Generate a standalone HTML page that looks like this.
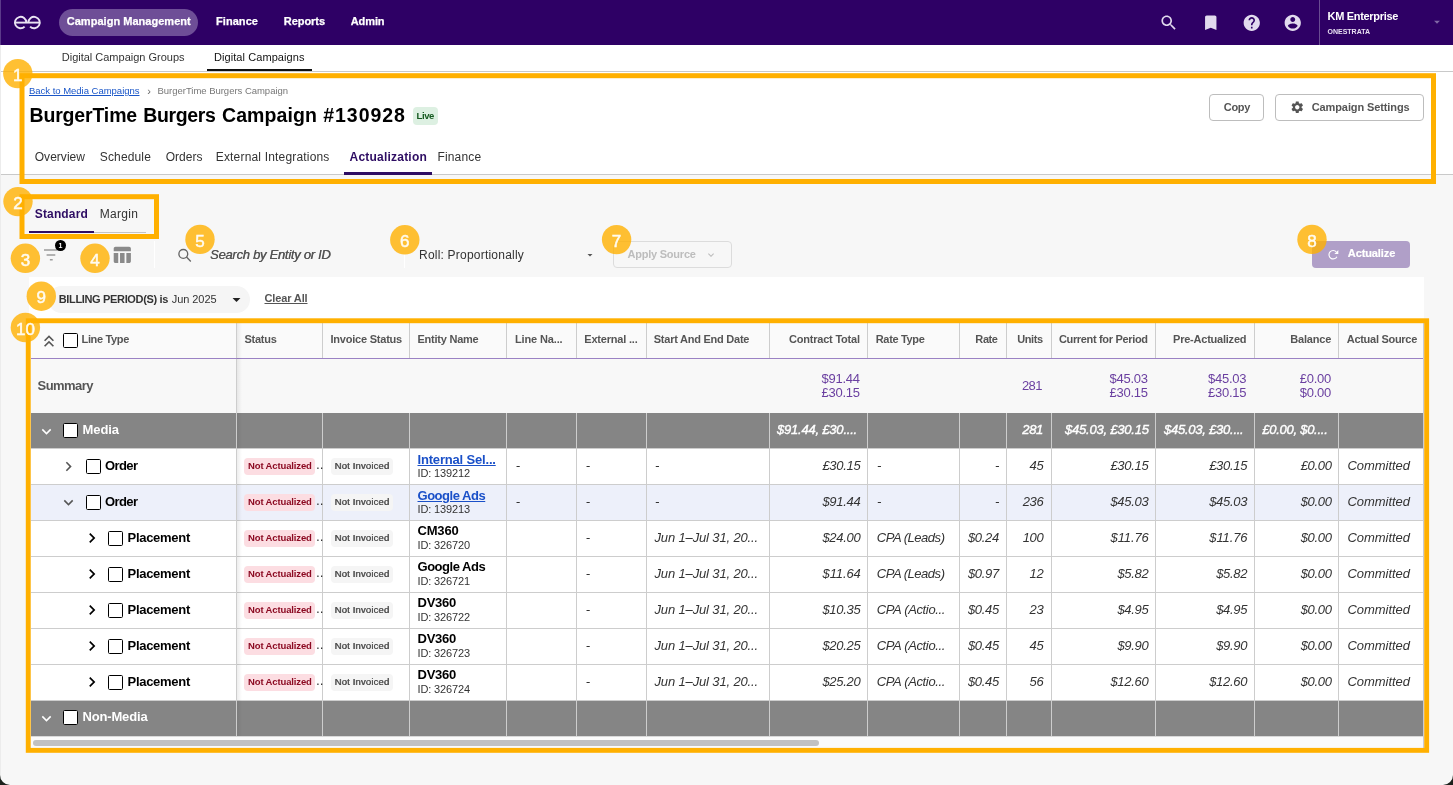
<!DOCTYPE html>
<html><head><meta charset="utf-8"><title>Campaign Actualization</title>
<style>
html,body{margin:0;padding:0;}
body{width:1453px;height:785px;position:relative;overflow:hidden;background:#F7F7F7;font-family:"Liberation Sans", sans-serif;}
#p{position:absolute;left:0;top:0;width:1453px;height:785px;overflow:hidden;will-change:transform;}
#p>div,#p>svg,#p>span{position:absolute;}
.t{white-space:pre;line-height:1;}
</style></head><body><div id="p">
<div style="left:0px;top:0px;width:1453px;height:45px;background:#2E0065;"></div>
<div style="left:0px;top:45px;width:1453px;height:129px;background:#fff;"></div>
<div style="left:0px;top:71px;width:1453px;height:1px;background:#C9C9C9;"></div>
<div style="left:0px;top:174px;width:1453px;height:1px;background:#C9C9C9;"></div>
<div style="left:0px;top:0px;width:1px;height:45px;background:#5B3A8A;"></div>
<div style="left:0px;top:45px;width:1px;height:740px;background:#ECECEC;"></div>
<div style="left:58.5px;top:9px;width:139.5px;height:27px;background:#6E4E97;border-radius:14px;"></div>
<svg style="left:0;top:0" width="60" height="45" viewBox="0 0 60 45"><g fill="none" stroke="#EAE3F3" stroke-width="1.9"><path d="M14.9 22.6 H39.8"/><path d="M26.3 22.55 A5.7 5.7 0 1 0 24.63 26.58"/><path d="M28.4 22.55 A5.7 5.7 0 1 1 30.07 26.58"/></g></svg>
<svg style="left:1158.55px;top:12.75px" width="19.5" height="19.5" viewBox="0 0 24 24"><path fill="#E2DAEE" d="M15.5 14h-.79l-.28-.27C15.41 12.59 16 11.11 16 9.5 16 5.91 13.09 3 9.5 3S3 5.91 3 9.5 5.91 16 9.5 16c1.61 0 3.09-.59 4.23-1.57l.27.28v.79l5 4.99L20.49 19l-4.99-5zm-6 0C7.01 14 5 11.99 5 9.5S7.01 5 9.5 5 14 7.01 14 9.5 11.99 14 9.5 14z" /></svg>
<svg style="left:1200.85px;top:12.75px" width="19.5" height="19.5" viewBox="0 0 24 24"><path fill="#E2DAEE" d="M17 3H7c-1.1 0-1.99.9-1.99 2L5 21l7-3 7 3V5c0-1.1-.9-2-2-2z" /></svg>
<svg style="left:1241.65px;top:12.850000000000001px" width="19.5" height="19.5" viewBox="0 0 24 24"><path fill="#E2DAEE" d="M12 2C6.48 2 2 6.48 2 12s4.48 10 10 10 10-4.48 10-10S17.52 2 12 2zm1 17h-2v-2h2v2zm2.07-7.75l-.9.92C13.45 12.9 13 13.5 13 15h-2v-.5c0-1.1.45-2.1 1.17-2.83l1.24-1.26c.37-.36.59-.86.59-1.41 0-1.1-.9-2-2-2s-2 .9-2 2H8c0-2.21 1.79-4 4-4s4 1.79 4 4c0 .88-.36 1.68-.93 2.25z" /></svg>
<svg style="left:1282.85px;top:12.850000000000001px" width="19.5" height="19.5" viewBox="0 0 24 24"><path fill="#E2DAEE" d="M12 2C6.48 2 2 6.48 2 12s4.48 10 10 10 10-4.48 10-10S17.52 2 12 2zm0 3c1.66 0 3 1.34 3 3s-1.34 3-3 3-3-1.34-3-3 1.34-3 3-3zm0 14.2c-2.5 0-4.71-1.28-6-3.22.03-1.99 4-3.08 6-3.08 1.99 0 5.97 1.09 6 3.08-1.29 1.94-3.5 3.22-6 3.22z" /></svg>
<div style="left:1319px;top:0px;width:1px;height:45px;background:#6A4D92;"></div>
<svg style="left:1429.7px;top:15.399999999999999px" width="14" height="14" viewBox="0 0 24 24"><path fill="#8067A6" d="M7 10l5 5 5-5z" /></svg>
<div style="left:207px;top:69px;width:105px;height:2px;background:#111;"></div>
<div style="left:413px;top:107px;width:25px;height:18px;background:#DDF0E2;border-radius:4px;"></div>
<div style="left:1209px;top:94px;width:55px;height:27px;background:#fff;border:1px solid #BDBDBD;border-radius:4px;box-sizing:border-box;"></div>
<div style="left:1275px;top:94px;width:149px;height:27px;background:#fff;border:1px solid #BDBDBD;border-radius:4px;box-sizing:border-box;"></div>
<svg style="left:1289.75px;top:100.25px" width="14.5" height="14.5" viewBox="0 0 24 24"><path fill="#555" d="M19.14 12.94c.04-.3.06-.61.06-.94 0-.32-.02-.64-.07-.94l2.03-1.58c.18-.14.23-.41.12-.61l-1.92-3.32c-.12-.22-.37-.29-.59-.22l-2.39.96c-.5-.38-1.03-.7-1.62-.94l-.36-2.54c-.04-.24-.24-.41-.48-.41h-3.84c-.24 0-.43.17-.47.41l-.36 2.54c-.59.24-1.13.57-1.62.94l-2.39-.96c-.22-.08-.47 0-.59.22L2.74 8.87c-.12.21-.08.47.12.61l2.03 1.58c-.05.3-.09.63-.09.94s.02.64.07.94l-2.03 1.58c-.18.14-.23.41-.12.61l1.92 3.32c.12.22.37.29.59.22l2.39-.96c.5.38 1.03.7 1.62.94l.36 2.54c.05.24.24.41.48.41h3.84c.24 0 .44-.17.47-.41l.36-2.54c.59-.24 1.13-.56 1.62-.94l2.39.96c.22.08.47 0 .59-.22l1.92-3.32c.12-.22.07-.47-.12-.61l-2.01-1.58zM12 15.6c-1.98 0-3.6-1.62-3.6-3.6s1.62-3.6 3.6-3.6 3.6 1.62 3.6 3.6-1.62 3.6-3.6 3.6z" /></svg>
<div style="left:344px;top:172px;width:88px;height:3px;background:#2E0D63;"></div>
<div style="left:29px;top:232px;width:117px;height:1px;background:#C4C4C4;"></div>
<div style="left:29px;top:230.5px;width:65px;height:2.5px;background:#2E0D63;"></div>
<svg style="left:40px;top:245px" width="24" height="20" viewBox="0 0 24 20"><g stroke="#9C9C9C" stroke-width="1.5"><path d="M4 5.1H17.6M6.6 9.9H15.3M9.9 14.7H12.7"/></g></svg>
<div style="left:55px;top:240.3px;width:10.8px;height:10.8px;background:#000;border-radius:50%;"></div>
<svg style="left:111.05000000000001px;top:244.05px" width="21.7" height="21.7" viewBox="0 0 24 24"><path fill="#8A8A8A" d="M10 10.02h5V21h-5zM17 21h3c1.1 0 2-.9 2-2v-9h-5v11zm3-18H5c-1.1 0-2 .9-2 2v3h19V5c0-1.1-.9-2-2-2zM3 19c0 1.1.9 2 2 2h3V10H3v9z" /></svg>
<div style="left:154px;top:241px;width:1px;height:27px;background:#fff;"></div>
<svg style="left:170px;top:242px" width="30" height="26" viewBox="170 242 30 26"><g fill="none" stroke="#666" stroke-width="1.35"><circle cx="183.3" cy="253.9" r="4.4"/><path d="M186.5 257.1 L190.8 261.4"/></g></svg>
<div style="left:403.5px;top:254px;width:1px;height:14px;background:#fff;"></div>
<svg style="left:584.2px;top:248.5px" width="12" height="12" viewBox="0 0 24 24"><path fill="#555" d="M7 10l5 5 5-5z" /></svg>
<div style="left:613px;top:241px;width:119px;height:27px;border:1px solid #DCDCDC;border-radius:4px;box-sizing:border-box;"></div>
<svg style="left:704.5px;top:248.5px" width="12" height="12" viewBox="0 0 24 24"><path fill="#BDBDBD" d="M16.59 8.59L12 13.17 7.41 8.59 6 10l6 6 6-6z" /></svg>
<div style="left:1312px;top:241px;width:98px;height:27px;background:#B09FC8;border-radius:4px;"></div>
<svg style="left:1320px;top:242px" width="26" height="26" viewBox="1320 242 26 26"><path d="M1336.32 251.89 A4.2 4.2 0 1 0 1336.91 256.67" fill="none" stroke="#fff" stroke-width="1.15"/><path d="M1338.3 250.0 V253.9 H1334.4 Z" fill="#fff"/></svg>
<div style="left:29px;top:277px;width:1395px;height:42px;background:#fff;"></div>
<div style="left:47.5px;top:286px;width:202.5px;height:27px;background:#F5F5F5;border-radius:14px;"></div>
<svg style="left:227.0px;top:289.8px" width="19" height="19" viewBox="0 0 24 24"><path fill="#222" d="M7 10l5 5 5-5z" /></svg>
<div style="left:31px;top:323px;width:1393px;height:35px;background:#FAFAFA;"></div>
<div style="left:31px;top:358px;width:1393px;height:1px;background:#9B82C4;"></div>
<div style="left:31px;top:359px;width:1393px;height:54px;background:#F8F8F8;"></div>
<div style="left:31px;top:413px;width:1393px;height:35px;background:#858585;"></div>
<div style="left:31px;top:448px;width:1393px;height:36px;background:#fff;"></div>
<div style="left:31px;top:484px;width:1393px;height:36px;background:#EDF0FA;"></div>
<div style="left:31px;top:520px;width:1393px;height:36px;background:#fff;"></div>
<div style="left:31px;top:556px;width:1393px;height:36px;background:#fff;"></div>
<div style="left:31px;top:592px;width:1393px;height:36px;background:#fff;"></div>
<div style="left:31px;top:628px;width:1393px;height:36px;background:#fff;"></div>
<div style="left:31px;top:664px;width:1393px;height:36px;background:#fff;"></div>
<div style="left:31px;top:700px;width:1393px;height:36px;background:#858585;"></div>
<div style="left:31px;top:736px;width:1393px;height:12px;background:#FAFAFA;"></div>
<div style="left:33px;top:740px;width:786px;height:6px;background:#C1C1C1;border-radius:3px;"></div>
<div style="left:31px;top:448px;width:1393px;height:1px;background:#CDCDCD;"></div>
<div style="left:31px;top:484px;width:1393px;height:1px;background:#CDCDCD;"></div>
<div style="left:31px;top:520px;width:1393px;height:1px;background:#CDCDCD;"></div>
<div style="left:31px;top:556px;width:1393px;height:1px;background:#CDCDCD;"></div>
<div style="left:31px;top:592px;width:1393px;height:1px;background:#CDCDCD;"></div>
<div style="left:31px;top:628px;width:1393px;height:1px;background:#CDCDCD;"></div>
<div style="left:31px;top:664px;width:1393px;height:1px;background:#CDCDCD;"></div>
<div style="left:31px;top:700px;width:1393px;height:1px;background:#CDCDCD;"></div>
<div style="left:31px;top:736px;width:1393px;height:1px;background:#D8D8D8;"></div>
<div style="left:236px;top:323px;width:1px;height:35px;background:#CDCDCD;"></div>
<div style="left:236px;top:413px;width:1px;height:323px;background:#CDCDCD;"></div>
<div style="left:322px;top:323px;width:1px;height:35px;background:#CDCDCD;"></div>
<div style="left:322px;top:413px;width:1px;height:323px;background:#CDCDCD;"></div>
<div style="left:409px;top:323px;width:1px;height:35px;background:#CDCDCD;"></div>
<div style="left:409px;top:413px;width:1px;height:323px;background:#CDCDCD;"></div>
<div style="left:506px;top:323px;width:1px;height:35px;background:#CDCDCD;"></div>
<div style="left:506px;top:413px;width:1px;height:323px;background:#CDCDCD;"></div>
<div style="left:576px;top:323px;width:1px;height:35px;background:#CDCDCD;"></div>
<div style="left:576px;top:413px;width:1px;height:323px;background:#CDCDCD;"></div>
<div style="left:646px;top:323px;width:1px;height:35px;background:#CDCDCD;"></div>
<div style="left:646px;top:413px;width:1px;height:323px;background:#CDCDCD;"></div>
<div style="left:769px;top:323px;width:1px;height:35px;background:#CDCDCD;"></div>
<div style="left:769px;top:413px;width:1px;height:323px;background:#CDCDCD;"></div>
<div style="left:867px;top:323px;width:1px;height:35px;background:#CDCDCD;"></div>
<div style="left:867px;top:413px;width:1px;height:323px;background:#CDCDCD;"></div>
<div style="left:959px;top:323px;width:1px;height:35px;background:#CDCDCD;"></div>
<div style="left:959px;top:413px;width:1px;height:323px;background:#CDCDCD;"></div>
<div style="left:1006px;top:323px;width:1px;height:35px;background:#CDCDCD;"></div>
<div style="left:1006px;top:413px;width:1px;height:323px;background:#CDCDCD;"></div>
<div style="left:1051px;top:323px;width:1px;height:35px;background:#CDCDCD;"></div>
<div style="left:1051px;top:413px;width:1px;height:323px;background:#CDCDCD;"></div>
<div style="left:1155px;top:323px;width:1px;height:35px;background:#CDCDCD;"></div>
<div style="left:1155px;top:413px;width:1px;height:323px;background:#CDCDCD;"></div>
<div style="left:1254px;top:323px;width:1px;height:35px;background:#CDCDCD;"></div>
<div style="left:1254px;top:413px;width:1px;height:323px;background:#CDCDCD;"></div>
<div style="left:1338px;top:323px;width:1px;height:35px;background:#CDCDCD;"></div>
<div style="left:1338px;top:413px;width:1px;height:323px;background:#CDCDCD;"></div>
<div style="left:1423px;top:323px;width:1px;height:425px;background:#C9CAD2;"></div>
<div style="left:236px;top:359px;width:1px;height:54px;background:#CDCDCD;"></div>
<div style="left:237px;top:323px;width:5px;height:413px;background:linear-gradient(to right,rgba(0,0,0,0.07),rgba(0,0,0,0));"></div>
<svg style="left:39.0px;top:331.0px" width="20" height="20" viewBox="0 0 24 24"><path fill="#555" d="M6 17.59L7.41 19 12 14.42 16.59 19 18 17.59l-6-6z M6 11l1.41 1.41L12 7.83l4.59 4.58L18 11l-6-6z" /></svg>
<div style="left:63px;top:333px;width:15px;height:15px;background:#fff;border:1.2px solid #000;border-radius:1.6px;box-sizing:border-box;"></div>
<svg style="left:37.0px;top:421.5px" width="19" height="19" viewBox="0 0 24 24"><path fill="#fff" d="M16.59 8.59L12 13.17 7.41 8.59 6 10l6 6 6-6z" /></svg>
<div style="left:63px;top:423px;width:15px;height:15px;background:#fff;border:1.2px solid #000;border-radius:1.6px;box-sizing:border-box;"></div>
<svg style="left:37.0px;top:709.0px" width="19" height="19" viewBox="0 0 24 24"><path fill="#fff" d="M16.59 8.59L12 13.17 7.41 8.59 6 10l6 6 6-6z" /></svg>
<div style="left:63px;top:710px;width:15px;height:15px;background:#fff;border:1.2px solid #000;border-radius:1.6px;box-sizing:border-box;"></div>
<svg style="left:59.0px;top:456.5px" width="19" height="19" viewBox="0 0 24 24"><path fill="#555" d="M10 6L8.59 7.41 13.17 12l-4.58 4.59L10 18l6-6z" /></svg>
<div style="left:86px;top:459px;width:15px;height:15px;background:#fff;border:1.2px solid #000;border-radius:1.6px;box-sizing:border-box;"></div>
<div style="left:244px;top:458px;width:71px;height:17px;background:#FCDDE2;border-radius:4px;"></div>
<div style="left:331px;top:458px;width:62px;height:17px;background:#F5F5F5;border-radius:4px;"></div>
<svg style="left:59.0px;top:492.5px" width="19" height="19" viewBox="0 0 24 24"><path fill="#555" d="M16.59 8.59L12 13.17 7.41 8.59 6 10l6 6 6-6z" /></svg>
<div style="left:86px;top:495px;width:15px;height:15px;background:#fff;border:1.2px solid #000;border-radius:1.6px;box-sizing:border-box;"></div>
<div style="left:244px;top:494px;width:71px;height:17px;background:#FCDDE2;border-radius:4px;"></div>
<div style="left:331px;top:494px;width:62px;height:17px;background:#F5F5F5;border-radius:4px;"></div>
<svg style="left:82.3px;top:528.2px" width="20" height="20" viewBox="0 0 24 24"><path fill="#000" d="M10 6L8.59 7.41 13.17 12l-4.58 4.59L10 18l6-6z" /></svg>
<div style="left:108px;top:531px;width:15px;height:15px;background:#fff;border:1.2px solid #000;border-radius:1.6px;box-sizing:border-box;"></div>
<div style="left:244px;top:530px;width:71px;height:17px;background:#FCDDE2;border-radius:4px;"></div>
<div style="left:331px;top:530px;width:62px;height:17px;background:#F5F5F5;border-radius:4px;"></div>
<svg style="left:82.3px;top:564.2px" width="20" height="20" viewBox="0 0 24 24"><path fill="#000" d="M10 6L8.59 7.41 13.17 12l-4.58 4.59L10 18l6-6z" /></svg>
<div style="left:108px;top:567px;width:15px;height:15px;background:#fff;border:1.2px solid #000;border-radius:1.6px;box-sizing:border-box;"></div>
<div style="left:244px;top:566px;width:71px;height:17px;background:#FCDDE2;border-radius:4px;"></div>
<div style="left:331px;top:566px;width:62px;height:17px;background:#F5F5F5;border-radius:4px;"></div>
<svg style="left:82.3px;top:600.2px" width="20" height="20" viewBox="0 0 24 24"><path fill="#000" d="M10 6L8.59 7.41 13.17 12l-4.58 4.59L10 18l6-6z" /></svg>
<div style="left:108px;top:603px;width:15px;height:15px;background:#fff;border:1.2px solid #000;border-radius:1.6px;box-sizing:border-box;"></div>
<div style="left:244px;top:602px;width:71px;height:17px;background:#FCDDE2;border-radius:4px;"></div>
<div style="left:331px;top:602px;width:62px;height:17px;background:#F5F5F5;border-radius:4px;"></div>
<svg style="left:82.3px;top:636.2px" width="20" height="20" viewBox="0 0 24 24"><path fill="#000" d="M10 6L8.59 7.41 13.17 12l-4.58 4.59L10 18l6-6z" /></svg>
<div style="left:108px;top:639px;width:15px;height:15px;background:#fff;border:1.2px solid #000;border-radius:1.6px;box-sizing:border-box;"></div>
<div style="left:244px;top:638px;width:71px;height:17px;background:#FCDDE2;border-radius:4px;"></div>
<div style="left:331px;top:638px;width:62px;height:17px;background:#F5F5F5;border-radius:4px;"></div>
<svg style="left:82.3px;top:672.2px" width="20" height="20" viewBox="0 0 24 24"><path fill="#000" d="M10 6L8.59 7.41 13.17 12l-4.58 4.59L10 18l6-6z" /></svg>
<div style="left:108px;top:675px;width:15px;height:15px;background:#fff;border:1.2px solid #000;border-radius:1.6px;box-sizing:border-box;"></div>
<div style="left:244px;top:674px;width:71px;height:17px;background:#FCDDE2;border-radius:4px;"></div>
<div style="left:331px;top:674px;width:62px;height:17px;background:#F5F5F5;border-radius:4px;"></div>
<svg style="left:0;top:0" width="1453" height="785" viewBox="0 0 1453 785"><rect x="22.0" y="75.7" width="1411.5" height="105.8" fill="none" stroke="#FFB000" stroke-width="5"/><rect x="22.0" y="196.7" width="134.5" height="39.80000000000001" fill="none" stroke="#FFB000" stroke-width="5"/><rect x="28.25" y="320.75" width="1398.3999999999999" height="429.59999999999997" fill="none" stroke="#FFB000" stroke-width="4.9"/><circle cx="17.8" cy="73.6" r="14.7" fill="#FFB000" fill-opacity="0.8"/><circle cx="18" cy="201.6" r="14.7" fill="#FFB000" fill-opacity="0.8"/><circle cx="25.4" cy="258.3" r="14.7" fill="#FFB000" fill-opacity="0.8"/><circle cx="95" cy="258.3" r="14.7" fill="#FFB000" fill-opacity="0.8"/><circle cx="200" cy="239.4" r="14.7" fill="#FFB000" fill-opacity="0.8"/><circle cx="404.8" cy="239.8" r="14.7" fill="#FFB000" fill-opacity="0.8"/><circle cx="616.6" cy="239.6" r="14.7" fill="#FFB000" fill-opacity="0.8"/><circle cx="1312" cy="239.4" r="14.7" fill="#FFB000" fill-opacity="0.8"/><circle cx="41.3" cy="296.2" r="14.7" fill="#FFB000" fill-opacity="0.8"/><circle cx="25.4" cy="327.5" r="14.7" fill="#FFB000" fill-opacity="0.8"/><path d="M0 775 A10 10 0 0 0 10 785 L0 785 Z" fill="#1C211C"/><path d="M1453 775 A10 10 0 0 1 1443 785 L1453 785 Z" fill="#1C211C"/></svg>
<span class="t" style="top:16px;font-size:11px;color:#fff;font-weight:bold;letter-spacing:0.028px;left:66.75px;-webkit-text-stroke:0.25px #fff;">Campaign Management</span>
<span class="t" style="top:16px;font-size:11px;color:#fff;font-weight:bold;letter-spacing:0.060px;left:216px;-webkit-text-stroke:0.25px #fff;">Finance</span>
<span class="t" style="top:16px;font-size:11px;color:#fff;font-weight:bold;letter-spacing:-0.045px;left:283.75px;-webkit-text-stroke:0.25px #fff;">Reports</span>
<span class="t" style="top:16px;font-size:11px;color:#fff;font-weight:bold;letter-spacing:-0.097px;left:350.75px;-webkit-text-stroke:0.25px #fff;">Admin</span>
<span class="t" style="top:11px;font-size:11px;color:#fff;font-weight:bold;letter-spacing:-0.314px;left:1327.5px;">KM Enterprise</span>
<span class="t" style="top:28px;font-size:7px;color:#E8E0F2;font-weight:bold;left:1327.5px;">ONESTRATA</span>
<span class="t" style="top:52px;font-size:11px;color:#333;letter-spacing:-0.006px;left:61.75px;">Digital Campaign Groups</span>
<span class="t" style="top:52px;font-size:11px;color:#111;letter-spacing:0.073px;left:214px;">Digital Campaigns</span>
<span class="t" style="top:86px;font-size:9.5px;color:#1A56C8;letter-spacing:-0.017px;left:29px;text-decoration:underline;">Back to Media Campaigns</span>
<span class="t" style="top:86px;font-size:11px;color:#666;left:147.2px;">›</span>
<span class="t" style="top:86px;font-size:9.5px;color:#777;letter-spacing:-0.023px;left:157.5px;">BurgerTime Burgers Campaign</span>
<span class="t" style="top:106px;font-size:19.5px;color:#000;font-weight:bold;letter-spacing:-0.159px;left:29.5px;">BurgerTime</span>
<span class="t" style="top:106px;font-size:19.5px;color:#000;font-weight:bold;letter-spacing:-0.362px;left:143.25px;">Burgers</span>
<span class="t" style="top:106px;font-size:19.5px;color:#000;font-weight:bold;letter-spacing:0.092px;left:222px;">Campaign</span>
<span class="t" style="top:106px;font-size:19.5px;color:#000;font-weight:bold;letter-spacing:0.954px;left:323.25px;">#130928</span>
<span class="t" style="top:111px;font-size:9.5px;color:#14591F;font-weight:bold;letter-spacing:-0.379px;left:416.5px;">Live</span>
<span class="t" style="top:102px;font-size:11px;color:#555;font-weight:bold;letter-spacing:-0.312px;left:1223.75px;">Copy</span>
<span class="t" style="top:102px;font-size:11px;color:#555;font-weight:bold;letter-spacing:-0.110px;left:1311.75px;">Campaign Settings</span>
<span class="t" style="top:151px;font-size:12px;color:#333;letter-spacing:0.029px;left:34.75px;">Overview</span>
<span class="t" style="top:151px;font-size:12px;color:#333;letter-spacing:0.150px;left:99.75px;">Schedule</span>
<span class="t" style="top:151px;font-size:12px;color:#333;letter-spacing:0.010px;left:165.75px;">Orders</span>
<span class="t" style="top:151px;font-size:12px;color:#333;letter-spacing:0.176px;left:215.75px;">External Integrations</span>
<span class="t" style="top:151px;font-size:12px;color:#2E0D63;font-weight:bold;letter-spacing:0.218px;left:349.5px;">Actualization</span>
<span class="t" style="top:151px;font-size:12px;color:#333;letter-spacing:0.150px;left:437.5px;">Finance</span>
<span class="t" style="top:208px;font-size:12px;color:#2E0D63;font-weight:bold;letter-spacing:0.154px;left:34.75px;">Standard</span>
<span class="t" style="top:208px;font-size:12px;color:#333;letter-spacing:0.302px;left:99.75px;">Margin</span>
<span class="t" style="top:242px;font-size:7px;color:#fff;font-weight:bold;left:58.6px;">1</span>
<span class="t" style="top:248px;font-size:13px;color:#555;font-style:italic;letter-spacing:-0.271px;left:210px;text-shadow:0.3px 0 0 #555;">Search by Entity or ID</span>
<span class="t" style="top:249px;font-size:12px;color:#333;letter-spacing:0.214px;left:419px;">Roll: Proportionally</span>
<span class="t" style="top:249px;font-size:11px;color:#BDBDBD;font-weight:bold;letter-spacing:-0.226px;left:627.5px;">Apply Source</span>
<span class="t" style="top:248px;font-size:11px;color:#fff;font-weight:bold;letter-spacing:-0.100px;left:1347.8px;-webkit-text-stroke:0.2px #fff;">Actualize</span>
<span class="t" style="top:294px;font-size:11px;color:#333;font-weight:bold;letter-spacing:-0.344px;left:58.75px;">BILLING PERIOD(S) is</span>
<span class="t" style="top:294px;font-size:11px;color:#333;letter-spacing:-0.064px;left:171.75px;">Jun 2025</span>
<span class="t" style="top:293px;font-size:11px;color:#555;font-weight:bold;letter-spacing:-0.137px;left:264.5px;text-decoration:underline;">Clear All</span>
<span class="t" style="top:334px;font-size:11px;color:#555;font-weight:bold;letter-spacing:-0.337px;left:81.5px;">Line Type</span>
<span class="t" style="top:334px;font-size:11px;color:#555;font-weight:bold;letter-spacing:-0.271px;left:244.5px;">Status</span>
<span class="t" style="top:334px;font-size:11px;color:#555;font-weight:bold;letter-spacing:-0.220px;left:330.5px;">Invoice Status</span>
<span class="t" style="top:334px;font-size:11px;color:#555;font-weight:bold;letter-spacing:-0.234px;left:417.5px;">Entity Name</span>
<span class="t" style="top:334px;font-size:11px;color:#555;font-weight:bold;letter-spacing:-0.141px;left:515px;">Line Na...</span>
<span class="t" style="top:334px;font-size:11px;color:#555;font-weight:bold;letter-spacing:-0.199px;left:584.25px;">External ...</span>
<span class="t" style="top:334px;font-size:11px;color:#555;font-weight:bold;letter-spacing:-0.240px;left:653.75px;">Start And End Date</span>
<span class="t" style="top:334px;font-size:11px;color:#555;font-weight:bold;letter-spacing:-0.214px;right:593.21px;">Contract Total</span>
<span class="t" style="top:334px;font-size:11px;color:#555;font-weight:bold;letter-spacing:-0.335px;left:875.75px;">Rate Type</span>
<span class="t" style="top:334px;font-size:11px;color:#555;font-weight:bold;letter-spacing:-0.398px;right:455.40px;">Rate</span>
<span class="t" style="top:334px;font-size:11px;color:#555;font-weight:bold;letter-spacing:-0.350px;right:410.10px;">Units</span>
<span class="t" style="top:334px;font-size:11px;color:#555;font-weight:bold;letter-spacing:-0.332px;right:305.33px;">Current for Period</span>
<span class="t" style="top:334px;font-size:11px;color:#555;font-weight:bold;letter-spacing:-0.227px;right:206.73px;">Pre-Actualized</span>
<span class="t" style="top:334px;font-size:11px;color:#555;font-weight:bold;letter-spacing:-0.208px;right:121.96px;">Balance</span>
<span class="t" style="top:334px;font-size:11px;color:#555;font-weight:bold;letter-spacing:-0.286px;left:1346.75px;">Actual Source</span>
<span class="t" style="top:379px;font-size:13px;color:#555;font-weight:bold;letter-spacing:-0.536px;left:37.5px;">Summary</span>
<span class="t" style="top:372px;font-size:13px;color:#6A3FA0;letter-spacing:-0.253px;right:593.25px;">$91.44</span>
<span class="t" style="top:386px;font-size:13px;color:#6A3FA0;letter-spacing:-0.253px;right:593.25px;">£30.15</span>
<span class="t" style="top:379px;font-size:13px;color:#6A3FA0;letter-spacing:-0.568px;right:411.07px;">281</span>
<span class="t" style="top:372px;font-size:13px;color:#6A3FA0;letter-spacing:-0.253px;right:305.25px;">$45.03</span>
<span class="t" style="top:386px;font-size:13px;color:#6A3FA0;letter-spacing:-0.253px;right:305.25px;">£30.15</span>
<span class="t" style="top:372px;font-size:13px;color:#6A3FA0;letter-spacing:-0.253px;right:206.75px;">$45.03</span>
<span class="t" style="top:386px;font-size:13px;color:#6A3FA0;letter-spacing:-0.253px;right:206.75px;">£30.15</span>
<span class="t" style="top:372px;font-size:13px;color:#6A3FA0;letter-spacing:-0.259px;right:122.01px;">£0.00</span>
<span class="t" style="top:386px;font-size:13px;color:#6A3FA0;letter-spacing:-0.259px;right:122.01px;">$0.00</span>
<span class="t" style="top:423px;font-size:13px;color:#fff;font-weight:bold;letter-spacing:-0.069px;left:82.5px;">Media</span>
<span class="t" style="top:423px;font-size:13px;color:#fff;font-style:italic;letter-spacing:-0.208px;left:777px;-webkit-text-stroke:0.4px #fff;">$91.44, £30....</span>
<span class="t" style="top:423px;font-size:13px;color:#fff;font-style:italic;letter-spacing:-0.401px;right:410.15px;-webkit-text-stroke:0.4px #fff;">281</span>
<span class="t" style="top:423px;font-size:13px;color:#fff;font-style:italic;letter-spacing:-0.214px;left:1065px;-webkit-text-stroke:0.4px #fff;">$45.03, £30.15</span>
<span class="t" style="top:423px;font-size:13px;color:#fff;font-style:italic;letter-spacing:-0.242px;left:1164px;-webkit-text-stroke:0.4px #fff;">$45.03, £30....</span>
<span class="t" style="top:423px;font-size:13px;color:#fff;font-style:italic;letter-spacing:-0.267px;left:1262.3px;-webkit-text-stroke:0.4px #fff;">£0.00, $0....</span>
<span class="t" style="top:710px;font-size:13px;color:#fff;font-weight:bold;letter-spacing:-0.161px;left:82.5px;">Non-Media</span>
<span class="t" style="top:459px;font-size:13px;color:#000;font-weight:bold;letter-spacing:-0.581px;left:105px;">Order</span>
<span class="t" style="top:461px;font-size:9.5px;color:#8C0A22;font-weight:bold;letter-spacing:-0.134px;left:248px;">Not Actualized</span>
<span class="t" style="top:459px;font-size:12px;color:#222;left:316.3px;letter-spacing:0.3px;">..</span>
<span class="t" style="top:461px;font-size:9.5px;color:#505050;letter-spacing:0.161px;left:334.5px;text-shadow:0.4px 0 0 #505050;">Not Invoiced</span>
<span class="t" style="top:453px;font-size:13px;color:#1A50C8;font-weight:bold;letter-spacing:-0.178px;left:417.5px;text-decoration:underline;">Internal Sel...</span>
<span class="t" style="top:468px;font-size:11px;color:#333;letter-spacing:-0.133px;left:417.5px;">ID: 139212</span>
<span class="t" style="top:459px;font-size:13px;color:#333;font-style:italic;left:515.75px;">-</span>
<span class="t" style="top:459px;font-size:13px;color:#333;font-style:italic;left:585.75px;">-</span>
<span class="t" style="top:459px;font-size:13px;color:#333;font-style:italic;left:655px;">-</span>
<span class="t" style="top:459px;font-size:13px;color:#333;font-style:italic;letter-spacing:-0.286px;right:592.54px;">£30.15</span>
<span class="t" style="top:459px;font-size:13px;color:#333;font-style:italic;left:877px;">-</span>
<span class="t" style="top:459px;font-size:13px;color:#333;font-style:italic;right:453.75px;">-</span>
<span class="t" style="top:459px;font-size:13px;color:#333;font-style:italic;letter-spacing:-0.284px;right:409.53px;">45</span>
<span class="t" style="top:459px;font-size:13px;color:#333;font-style:italic;letter-spacing:-0.286px;right:304.54px;">£30.15</span>
<span class="t" style="top:459px;font-size:13px;color:#333;font-style:italic;letter-spacing:-0.286px;right:205.79px;">£30.15</span>
<span class="t" style="top:459px;font-size:13px;color:#333;font-style:italic;letter-spacing:-0.289px;right:121.29px;">£0.00</span>
<span class="t" style="top:459px;font-size:13px;color:#333;font-style:italic;letter-spacing:-0.040px;left:1347.5px;">Committed</span>
<span class="t" style="top:495px;font-size:13px;color:#000;font-weight:bold;letter-spacing:-0.581px;left:105px;">Order</span>
<span class="t" style="top:497px;font-size:9.5px;color:#8C0A22;font-weight:bold;letter-spacing:-0.134px;left:248px;">Not Actualized</span>
<span class="t" style="top:495px;font-size:12px;color:#222;left:316.3px;letter-spacing:0.3px;">..</span>
<span class="t" style="top:497px;font-size:9.5px;color:#505050;letter-spacing:0.161px;left:334.5px;text-shadow:0.4px 0 0 #505050;">Not Invoiced</span>
<span class="t" style="top:489px;font-size:13px;color:#1A50C8;font-weight:bold;letter-spacing:-0.472px;left:417.5px;text-decoration:underline;">Google Ads</span>
<span class="t" style="top:504px;font-size:11px;color:#333;letter-spacing:-0.133px;left:417.5px;">ID: 139213</span>
<span class="t" style="top:495px;font-size:13px;color:#333;font-style:italic;left:515.75px;">-</span>
<span class="t" style="top:495px;font-size:13px;color:#333;font-style:italic;left:585.75px;">-</span>
<span class="t" style="top:495px;font-size:13px;color:#333;font-style:italic;left:655px;">-</span>
<span class="t" style="top:495px;font-size:13px;color:#333;font-style:italic;letter-spacing:-0.286px;right:592.54px;">$91.44</span>
<span class="t" style="top:495px;font-size:13px;color:#333;font-style:italic;left:877px;">-</span>
<span class="t" style="top:495px;font-size:13px;color:#333;font-style:italic;right:453.75px;">-</span>
<span class="t" style="top:495px;font-size:13px;color:#333;font-style:italic;letter-spacing:-0.284px;right:409.53px;">236</span>
<span class="t" style="top:495px;font-size:13px;color:#333;font-style:italic;letter-spacing:-0.286px;right:304.54px;">$45.03</span>
<span class="t" style="top:495px;font-size:13px;color:#333;font-style:italic;letter-spacing:-0.286px;right:205.79px;">$45.03</span>
<span class="t" style="top:495px;font-size:13px;color:#333;font-style:italic;letter-spacing:-0.289px;right:121.29px;">$0.00</span>
<span class="t" style="top:495px;font-size:13px;color:#333;font-style:italic;letter-spacing:-0.040px;left:1347.5px;">Committed</span>
<span class="t" style="top:531px;font-size:13px;color:#000;font-weight:bold;letter-spacing:-0.283px;left:127.5px;">Placement</span>
<span class="t" style="top:533px;font-size:9.5px;color:#8C0A22;font-weight:bold;letter-spacing:-0.134px;left:248px;">Not Actualized</span>
<span class="t" style="top:531px;font-size:12px;color:#222;left:316.3px;letter-spacing:0.3px;">..</span>
<span class="t" style="top:533px;font-size:9.5px;color:#505050;letter-spacing:0.161px;left:334.5px;text-shadow:0.4px 0 0 #505050;">Not Invoiced</span>
<span class="t" style="top:524px;font-size:13px;color:#000;font-weight:bold;letter-spacing:-0.184px;left:417.5px;">CM360</span>
<span class="t" style="top:540px;font-size:11px;color:#333;letter-spacing:-0.133px;left:417.5px;">ID: 326720</span>
<span class="t" style="top:531px;font-size:13px;color:#333;font-style:italic;left:585.75px;">-</span>
<span class="t" style="top:531px;font-size:13px;color:#333;font-style:italic;letter-spacing:-0.145px;left:654.5px;">Jun 1–Jul 31, 20...</span>
<span class="t" style="top:531px;font-size:13px;color:#333;font-style:italic;letter-spacing:-0.286px;right:592.54px;">$24.00</span>
<span class="t" style="top:531px;font-size:13px;color:#333;font-style:italic;letter-spacing:-0.476px;left:876.75px;">CPA (Leads)</span>
<span class="t" style="top:531px;font-size:13px;color:#333;font-style:italic;letter-spacing:-0.289px;right:454.04px;">$0.24</span>
<span class="t" style="top:531px;font-size:13px;color:#333;font-style:italic;letter-spacing:-0.284px;right:409.53px;">100</span>
<span class="t" style="top:531px;font-size:13px;color:#333;font-style:italic;letter-spacing:-0.124px;right:304.37px;">$11.76</span>
<span class="t" style="top:531px;font-size:13px;color:#333;font-style:italic;letter-spacing:-0.124px;right:205.62px;">$11.76</span>
<span class="t" style="top:531px;font-size:13px;color:#333;font-style:italic;letter-spacing:-0.289px;right:121.29px;">$0.00</span>
<span class="t" style="top:531px;font-size:13px;color:#333;font-style:italic;letter-spacing:-0.040px;left:1347.5px;">Committed</span>
<span class="t" style="top:567px;font-size:13px;color:#000;font-weight:bold;letter-spacing:-0.283px;left:127.5px;">Placement</span>
<span class="t" style="top:569px;font-size:9.5px;color:#8C0A22;font-weight:bold;letter-spacing:-0.134px;left:248px;">Not Actualized</span>
<span class="t" style="top:567px;font-size:12px;color:#222;left:316.3px;letter-spacing:0.3px;">..</span>
<span class="t" style="top:569px;font-size:9.5px;color:#505050;letter-spacing:0.161px;left:334.5px;text-shadow:0.4px 0 0 #505050;">Not Invoiced</span>
<span class="t" style="top:560px;font-size:13px;color:#000;font-weight:bold;letter-spacing:-0.472px;left:417.5px;">Google Ads</span>
<span class="t" style="top:576px;font-size:11px;color:#333;letter-spacing:-0.133px;left:417.5px;">ID: 326721</span>
<span class="t" style="top:567px;font-size:13px;color:#333;font-style:italic;left:585.75px;">-</span>
<span class="t" style="top:567px;font-size:13px;color:#333;font-style:italic;letter-spacing:-0.145px;left:654.5px;">Jun 1–Jul 31, 20...</span>
<span class="t" style="top:567px;font-size:13px;color:#333;font-style:italic;letter-spacing:-0.124px;right:592.37px;">$11.64</span>
<span class="t" style="top:567px;font-size:13px;color:#333;font-style:italic;letter-spacing:-0.476px;left:876.75px;">CPA (Leads)</span>
<span class="t" style="top:567px;font-size:13px;color:#333;font-style:italic;letter-spacing:-0.289px;right:454.04px;">$0.97</span>
<span class="t" style="top:567px;font-size:13px;color:#333;font-style:italic;letter-spacing:-0.284px;right:409.53px;">12</span>
<span class="t" style="top:567px;font-size:13px;color:#333;font-style:italic;letter-spacing:-0.289px;right:304.54px;">$5.82</span>
<span class="t" style="top:567px;font-size:13px;color:#333;font-style:italic;letter-spacing:-0.289px;right:205.79px;">$5.82</span>
<span class="t" style="top:567px;font-size:13px;color:#333;font-style:italic;letter-spacing:-0.289px;right:121.29px;">$0.00</span>
<span class="t" style="top:567px;font-size:13px;color:#333;font-style:italic;letter-spacing:-0.040px;left:1347.5px;">Committed</span>
<span class="t" style="top:603px;font-size:13px;color:#000;font-weight:bold;letter-spacing:-0.283px;left:127.5px;">Placement</span>
<span class="t" style="top:605px;font-size:9.5px;color:#8C0A22;font-weight:bold;letter-spacing:-0.134px;left:248px;">Not Actualized</span>
<span class="t" style="top:603px;font-size:12px;color:#222;left:316.3px;letter-spacing:0.3px;">..</span>
<span class="t" style="top:605px;font-size:9.5px;color:#505050;letter-spacing:0.161px;left:334.5px;text-shadow:0.4px 0 0 #505050;">Not Invoiced</span>
<span class="t" style="top:596px;font-size:13px;color:#000;font-weight:bold;letter-spacing:-0.250px;left:417.5px;">DV360</span>
<span class="t" style="top:612px;font-size:11px;color:#333;letter-spacing:-0.133px;left:417.5px;">ID: 326722</span>
<span class="t" style="top:603px;font-size:13px;color:#333;font-style:italic;left:585.75px;">-</span>
<span class="t" style="top:603px;font-size:13px;color:#333;font-style:italic;letter-spacing:-0.145px;left:654.5px;">Jun 1–Jul 31, 20...</span>
<span class="t" style="top:603px;font-size:13px;color:#333;font-style:italic;letter-spacing:-0.286px;right:592.54px;">$10.35</span>
<span class="t" style="top:603px;font-size:13px;color:#333;font-style:italic;letter-spacing:-0.363px;left:876.75px;">CPA (Actio...</span>
<span class="t" style="top:603px;font-size:13px;color:#333;font-style:italic;letter-spacing:-0.289px;right:454.04px;">$0.45</span>
<span class="t" style="top:603px;font-size:13px;color:#333;font-style:italic;letter-spacing:-0.284px;right:409.53px;">23</span>
<span class="t" style="top:603px;font-size:13px;color:#333;font-style:italic;letter-spacing:-0.289px;right:304.54px;">$4.95</span>
<span class="t" style="top:603px;font-size:13px;color:#333;font-style:italic;letter-spacing:-0.289px;right:205.79px;">$4.95</span>
<span class="t" style="top:603px;font-size:13px;color:#333;font-style:italic;letter-spacing:-0.289px;right:121.29px;">$0.00</span>
<span class="t" style="top:603px;font-size:13px;color:#333;font-style:italic;letter-spacing:-0.040px;left:1347.5px;">Committed</span>
<span class="t" style="top:639px;font-size:13px;color:#000;font-weight:bold;letter-spacing:-0.283px;left:127.5px;">Placement</span>
<span class="t" style="top:641px;font-size:9.5px;color:#8C0A22;font-weight:bold;letter-spacing:-0.134px;left:248px;">Not Actualized</span>
<span class="t" style="top:639px;font-size:12px;color:#222;left:316.3px;letter-spacing:0.3px;">..</span>
<span class="t" style="top:641px;font-size:9.5px;color:#505050;letter-spacing:0.161px;left:334.5px;text-shadow:0.4px 0 0 #505050;">Not Invoiced</span>
<span class="t" style="top:632px;font-size:13px;color:#000;font-weight:bold;letter-spacing:-0.250px;left:417.5px;">DV360</span>
<span class="t" style="top:648px;font-size:11px;color:#333;letter-spacing:-0.133px;left:417.5px;">ID: 326723</span>
<span class="t" style="top:639px;font-size:13px;color:#333;font-style:italic;left:585.75px;">-</span>
<span class="t" style="top:639px;font-size:13px;color:#333;font-style:italic;letter-spacing:-0.145px;left:654.5px;">Jun 1–Jul 31, 20...</span>
<span class="t" style="top:639px;font-size:13px;color:#333;font-style:italic;letter-spacing:-0.286px;right:592.54px;">$20.25</span>
<span class="t" style="top:639px;font-size:13px;color:#333;font-style:italic;letter-spacing:-0.363px;left:876.75px;">CPA (Actio...</span>
<span class="t" style="top:639px;font-size:13px;color:#333;font-style:italic;letter-spacing:-0.289px;right:454.04px;">$0.45</span>
<span class="t" style="top:639px;font-size:13px;color:#333;font-style:italic;letter-spacing:-0.284px;right:409.53px;">45</span>
<span class="t" style="top:639px;font-size:13px;color:#333;font-style:italic;letter-spacing:-0.289px;right:304.54px;">$9.90</span>
<span class="t" style="top:639px;font-size:13px;color:#333;font-style:italic;letter-spacing:-0.289px;right:205.79px;">$9.90</span>
<span class="t" style="top:639px;font-size:13px;color:#333;font-style:italic;letter-spacing:-0.289px;right:121.29px;">$0.00</span>
<span class="t" style="top:639px;font-size:13px;color:#333;font-style:italic;letter-spacing:-0.040px;left:1347.5px;">Committed</span>
<span class="t" style="top:675px;font-size:13px;color:#000;font-weight:bold;letter-spacing:-0.283px;left:127.5px;">Placement</span>
<span class="t" style="top:677px;font-size:9.5px;color:#8C0A22;font-weight:bold;letter-spacing:-0.134px;left:248px;">Not Actualized</span>
<span class="t" style="top:675px;font-size:12px;color:#222;left:316.3px;letter-spacing:0.3px;">..</span>
<span class="t" style="top:677px;font-size:9.5px;color:#505050;letter-spacing:0.161px;left:334.5px;text-shadow:0.4px 0 0 #505050;">Not Invoiced</span>
<span class="t" style="top:668px;font-size:13px;color:#000;font-weight:bold;letter-spacing:-0.250px;left:417.5px;">DV360</span>
<span class="t" style="top:684px;font-size:11px;color:#333;letter-spacing:-0.133px;left:417.5px;">ID: 326724</span>
<span class="t" style="top:675px;font-size:13px;color:#333;font-style:italic;left:585.75px;">-</span>
<span class="t" style="top:675px;font-size:13px;color:#333;font-style:italic;letter-spacing:-0.145px;left:654.5px;">Jun 1–Jul 31, 20...</span>
<span class="t" style="top:675px;font-size:13px;color:#333;font-style:italic;letter-spacing:-0.286px;right:592.54px;">$25.20</span>
<span class="t" style="top:675px;font-size:13px;color:#333;font-style:italic;letter-spacing:-0.363px;left:876.75px;">CPA (Actio...</span>
<span class="t" style="top:675px;font-size:13px;color:#333;font-style:italic;letter-spacing:-0.289px;right:454.04px;">$0.45</span>
<span class="t" style="top:675px;font-size:13px;color:#333;font-style:italic;letter-spacing:-0.284px;right:409.53px;">56</span>
<span class="t" style="top:675px;font-size:13px;color:#333;font-style:italic;letter-spacing:-0.286px;right:304.54px;">$12.60</span>
<span class="t" style="top:675px;font-size:13px;color:#333;font-style:italic;letter-spacing:-0.286px;right:205.79px;">$12.60</span>
<span class="t" style="top:675px;font-size:13px;color:#333;font-style:italic;letter-spacing:-0.289px;right:121.29px;">$0.00</span>
<span class="t" style="top:675px;font-size:13px;color:#333;font-style:italic;letter-spacing:-0.040px;left:1347.5px;">Committed</span>
<span class="t" style="top:67px;font-size:17px;color:#FFFBF0;left:-32.2px;width:100px;text-align:center;-webkit-text-stroke:0.5px #FFFBF0;">1</span>
<span class="t" style="top:195px;font-size:17px;color:#FFFBF0;left:-32px;width:100px;text-align:center;-webkit-text-stroke:0.5px #FFFBF0;">2</span>
<span class="t" style="top:252px;font-size:17px;color:#FFFBF0;left:-24.6px;width:100px;text-align:center;-webkit-text-stroke:0.5px #FFFBF0;">3</span>
<span class="t" style="top:252px;font-size:17px;color:#FFFBF0;left:45px;width:100px;text-align:center;-webkit-text-stroke:0.5px #FFFBF0;">4</span>
<span class="t" style="top:233px;font-size:17px;color:#FFFBF0;left:150px;width:100px;text-align:center;-webkit-text-stroke:0.5px #FFFBF0;">5</span>
<span class="t" style="top:233px;font-size:17px;color:#FFFBF0;left:354.8px;width:100px;text-align:center;-webkit-text-stroke:0.5px #FFFBF0;">6</span>
<span class="t" style="top:233px;font-size:17px;color:#FFFBF0;left:566.6px;width:100px;text-align:center;-webkit-text-stroke:0.5px #FFFBF0;">7</span>
<span class="t" style="top:233px;font-size:17px;color:#FFFBF0;left:1262px;width:100px;text-align:center;-webkit-text-stroke:0.5px #FFFBF0;">8</span>
<span class="t" style="top:289px;font-size:17px;color:#FFFBF0;left:-8.700000000000003px;width:100px;text-align:center;-webkit-text-stroke:0.5px #FFFBF0;">9</span>
<span class="t" style="top:321px;font-size:17px;color:#FFFBF0;left:-24.6px;width:100px;text-align:center;-webkit-text-stroke:0.5px #FFFBF0;">10</span>
</div></body></html>
